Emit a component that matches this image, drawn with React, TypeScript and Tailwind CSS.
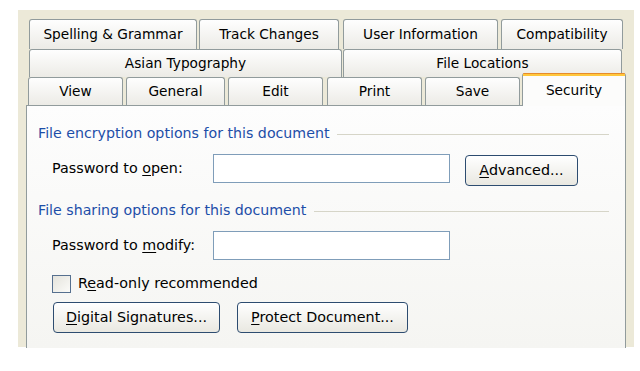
import React from "react";

const font = { fontFamily: '"DejaVu Sans", Verdana, sans-serif' };

function Tab({ w, label, className = "" }: { w: string; label: string; className?: string }) {
  return (
    <div
      className={`${w} ${className} flex items-center justify-center rounded-t-[3px] border-x border-t border-[#919b9c] bg-gradient-to-b from-[#fefefe] to-[#ecebe6] text-[13.7px] text-black`}
    >
      <span>{label}</span>
    </div>
  );
}

function U({ children }: { children: React.ReactNode }) {
  return <span className="underline underline-offset-2">{children}</span>;
}

function Btn({ w, children }: { w: string; children: React.ReactNode }) {
  return (
    <div
      className={`${w} flex h-[31px] items-center justify-center rounded-[4px] border border-[#2d4c70] bg-gradient-to-b from-[#ffffff] to-[#e9e8e1] text-[14.3px] text-black`}
    >
      {children}
    </div>
  );
}

function Heading({ children }: { children: React.ReactNode }) {
  return (
    <div className="flex h-[18px] items-center pr-[16px]">
      <span className="whitespace-nowrap pt-[2px] text-[14.2px] text-[#1d4ea8]">{children}</span>
      <div className="ml-[8px] mt-[2px] h-px flex-1 bg-[#d6d5c8]" />
    </div>
  );
}

export default function App() {
  return (
    <div className="h-[371px] w-[640px] overflow-hidden bg-white pl-[18px] pt-[10px]" style={font}>
      <div className="h-[337px] w-[616px] bg-[#ece9d8] pl-[8px] pt-[9px]">
        <div className="w-[600px]">
          {/* Row 1 */}
          <div className="ml-[3px] flex h-[30px] gap-[2px]">
            <Tab w="w-[168px]" label="Spelling & Grammar" />
            <Tab w="w-[140px]" label="Track Changes" className="mr-[2px]" />
            <Tab w="w-[155px]" label="User Information" className="mr-[1px]" />
            <Tab w="w-[122px]" label="Compatibility" />
          </div>
          {/* Row 2 */}
          <div className="ml-[3px] flex h-[28px] gap-[1px]">
            <Tab w="w-[313px]" label="Asian Typography" />
            <Tab w="w-[279px]" label="File Locations" />
          </div>
          {/* Row 3 */}
          <div className="ml-[2px] flex h-[28px] items-end">
            <Tab w="w-[95px] h-[28px]" label="View" className="mr-[3px]" />
            <Tab w="w-[99px] h-[28px]" label="General" className="mr-[3px]" />
            <Tab w="w-[95px] h-[28px]" label="Edit" className="mr-[4px]" />
            <Tab w="w-[95px] h-[28px]" label="Print" className="mr-[3px]" />
            <Tab w="w-[95px] h-[28px]" label="Save" className="mr-[2px]" />
            <div className="relative z-10 mb-[-1px] flex h-[33px] w-[104px] flex-col rounded-t-[3px] border-x border-[#919b9c] bg-[#fcfcfb]">
              <div className="h-[1px] rounded-t-[3px] bg-[#e68b2c]" />
              <div className="h-[2px] bg-[#ffc73c]" />
              <div className="flex flex-1 items-center justify-center pb-[2px] text-[13.7px] text-black">
                <span>Security</span>
              </div>
            </div>
          </div>
          {/* Panel */}
          <div className="h-[243px] border-l border-r border-t border-[#919b9c] bg-gradient-to-b from-[#fdfdfd] to-[#f5f5f2] pl-[11px] pt-[18px]">
            <Heading>File encryption options for this document</Heading>
            <div className="mt-[12px] flex h-[32px] items-start">
              <div className="flex h-[29px] w-[175px] items-center pl-[14px] text-[14.3px] text-black">
                <span>
                  Password to <U>o</U>pen:
                </span>
              </div>
              <div className="h-[29px] w-[237px] border border-[#7f9db9] bg-white" />
              <div className="ml-[15px] mt-[1px]">
                <Btn w="w-[113px]">
                  <span>
                    <U>A</U>dvanced...
                  </span>
                </Btn>
              </div>
            </div>
            <div className="mt-[15px]">
              <Heading>File sharing options for this document</Heading>
            </div>
            <div className="mt-[12px] flex h-[29px] items-start">
              <div className="flex h-[29px] w-[175px] items-center pl-[14px] text-[14.3px] text-black">
                <span>
                  Password to <U>m</U>odify:
                </span>
              </div>
              <div className="h-[29px] w-[237px] border border-[#7f9db9] bg-white" />
            </div>
            <div className="mt-[15px] flex h-[18px] items-center pl-[14px]">
              <div className="h-[18px] w-[19px] border border-[#56708f] bg-gradient-to-br from-[#e4e3dc] to-[#fbfbf8]" />
              <span className="ml-[7px] text-[14.3px] text-black">
                R<U>e</U>ad-only recommended
              </span>
            </div>
            <div className="mt-[9px] flex pl-[15px]">
              <Btn w="w-[167px]">
                <span>
                  <U>D</U>igital Signatures...
                </span>
              </Btn>
              <div className="ml-[17px]">
                <Btn w="w-[171px]">
                  <span>
                    <U>P</U>rotect Document...
                  </span>
                </Btn>
              </div>
            </div>
          </div>
        </div>
      </div>
    </div>
  );
}
